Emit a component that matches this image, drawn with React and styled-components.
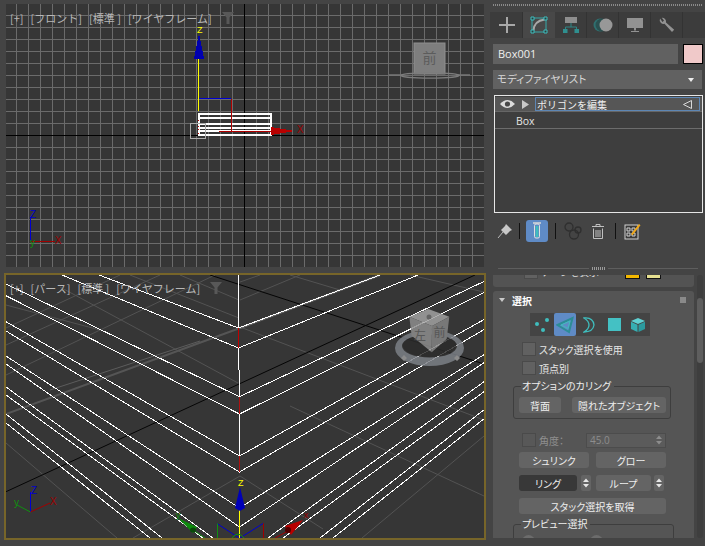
import React from "react";
import styled, { createGlobalStyle } from "styled-components";

const Global = createGlobalStyle`
  html, body { margin: 0; padding: 0; background: #444444; }
  * { box-sizing: border-box; }
  #root { width: 705px; height: 546px; overflow: hidden; }
`;

const jp = `"Noto Sans CJK JP", "Noto Sans", sans-serif`;

const Page = styled.div`
  width: 705px;
  height: 546px;
  display: flex;
  background: #444444;
  font-family: ${jp};
  font-feature-settings: "palt";
  color: #e4e4e4;
`;

const Views = styled.div`
  width: 490px;
  padding: 4px 4px 0;
  display: flex;
  flex-direction: column;
`;

const Viewport = styled.div`
  position: relative;
  background: #363636;
  height: ${(p) => (p.$active ? "267px" : "263px")};
  margin: ${(p) => (p.$active ? "0" : "0 2px 6px")};
  border: ${(p) => (p.$active ? "2px solid #776529" : "none")};
  overflow: hidden;
  svg { display: block; }
`;

const ViewLabel = styled.div`
  position: absolute;
  left: 4px;
  top: ${(p) => (p.$active ? "7px" : "8px")};
  display: flex;
  gap: 7px;
  font-size: 11px;
  line-height: 13px;
  color: #b8b8b8;
  white-space: nowrap;
  font-feature-settings: normal;
`;

const Side = styled.div`
  width: 215px;
  display: flex;
  flex-direction: column;
  padding: 4px 2px 0 3px;
`;

const Dots = styled.div`
  height: 2px;
  background: repeating-linear-gradient(90deg, #8a8a8a 0 1px, transparent 1px 2px);
`;

const TabBar = styled.div`
  display: flex;
  height: 26px;
  margin: 6px -2px 0 -3px;
  background: #3c3c3c;
  padding-left: 1px;
`;

const Tab = styled.div`
  width: 32px;
  height: 26px;
  display: flex;
  align-items: center;
  justify-content: center;
  background: ${(p) => (p.$active ? "#484848" : "transparent")};
  border-right: 1px solid ${(p) => (p.$active ? "#484848" : "#333333")};
`;

const NameRow = styled.div`
  display: flex;
  gap: 5px;
  margin-top: 6px;
`;

const NameField = styled.div`
  flex: 1;
  height: 20px;
  background: #616161;
  font-family: "Open Sans", sans-serif;
  font-size: 11px;
  line-height: 20px;
  padding-left: 5px;
  color: #eeeeee;
`;

const Swatch = styled.div`
  width: 20px;
  height: 20px;
  background: #f0c9c9;
  border: 1px solid #000000;
`;

const Dropdown = styled.div`
  margin-top: 6px;
  height: 19px;
  width: 209px;
  background: #616161;
  display: flex;
  align-items: center;
  justify-content: space-between;
  padding: 0 8px 2px 4px;
  font-size: 10.5px;
  color: #d8d8d8;
`;

const Arrow = styled.span`
  width: 0;
  height: 0;
  margin-top: 2px;
  border-left: 3px solid transparent;
  border-right: 3px solid transparent;
  border-top: 4px solid #eeeeee;
`;

const Stack = styled.div`
  margin: 6px 0 0 1px;
  width: 209px;
  height: 118px;
  border: 1.5px solid #e6e6e6;
  background: #3e3e3e;
  display: flex;
  flex-direction: column;
`;

const StackRow = styled.div`
  height: ${(p) => (p.$selected ? "15px" : "17px")};
  margin-top: ${(p) => (p.$selected ? "1px" : "0")};
  display: flex;
  align-items: center;
  background: ${(p) => (p.$selected ? "#565656" : "transparent")};
  border-bottom: 1px solid ${(p) => (p.$selected ? "#666666" : "#6c6c6c")};
  padding: ${(p) => (p.$selected ? "0 0 0 5px" : "2px 0 0 21px")};
  font-family: "Open Sans", sans-serif;
  font-size: 10.5px;
`;

const StackName = styled.div`
  width: 165px;
  height: 14px;
  margin-left: 6px;
  border: 1px solid #5d86b4;
  display: flex;
  align-items: center;
  justify-content: space-between;
  padding: 0 7px 0 1px;
  font-family: ${jp};
  font-size: 10px;
  font-feature-settings: normal;
  color: #f0f0f0;
`;

const Toolbar = styled.div`
  display: flex;
  align-items: center;
  height: 22px;
  margin-top: 7px;
`;

const ToolButton = styled.div`
  width: 22px;
  height: 22px;
  border-radius: 3px;
  display: flex;
  align-items: center;
  justify-content: center;
  background: ${(p) => (p.$active ? "#5f8bc6" : "transparent")};
  margin-left: ${(p) => p.$left || 0}px;
`;

const ToolSep = styled.div`
  width: 1px;
  height: 16px;
  background: #111111;
  margin-left: ${(p) => p.$left}px;
`;

const Divider = styled.div`
  display: flex;
  align-items: center;
  gap: 3px;
  margin: 25px 5px 0 5px;
  height: 3px;
`;

const DividerLine = styled.div`
  flex: 1;
  height: 1px;
  background: #5e5e5e;
`;

const DividerDots = styled.div`
  width: 13px;
  height: 3px;
  background: repeating-linear-gradient(90deg, #9a9a9a 0 1px, transparent 1px 2px);
`;

const Scroller = styled.div`
  display: flex;
  height: 263px;
  margin-top: 5px;
  overflow: hidden;
`;

const Rollouts = styled.div`
  width: 201px;
  overflow: hidden;
`;

const ScrollTrack = styled.div`
  width: 6px;
  margin-left: 3px;
  border-radius: 3px;
  background: #3e3e3e;
  padding-top: 23px;
`;

const ScrollThumb = styled.div`
  height: 65px;
  border-radius: 3px;
  background: #5e5e5e;
`;

const ClippedRollout = styled.div`
  height: 12px;
  background: #535353;
  border-radius: 0 0 3px 3px;
  overflow: hidden;
  padding-left: 31px;
`;

const ClippedInner = styled.div`
  display: flex;
  align-items: flex-end;
  height: 14px;
  margin-top: -10px;
  font-size: 10px;
  line-height: 14px;
  color: #dddddd;
  white-space: nowrap;
`;

const ClipLabel = styled.span`
  width: 84px;
`;

const ClipSwatch = styled.div`
  width: 15px;
  height: 14px;
  background: ${(p) => p.$color};
  border: 1px solid #111111;
  margin-right: 6px;
`;

const Rollout = styled.div`
  margin-top: 4px;
  height: 260px;
  background: #555555;
  border-radius: 3px 3px 0 0;
  padding-top: 2px;
`;

const RolloutHead = styled.div`
  display: flex;
  align-items: center;
  height: 14px;
  padding: 0 8px 0 6px;
  font-size: 10px;
  font-weight: 700;
  color: #ffffff;
`;

const HeadTriangle = styled.span`
  width: 0;
  height: 0;
  border-left: 3px solid transparent;
  border-right: 3px solid transparent;
  border-top: 4px solid #c9c9c9;
  margin-right: 7px;
`;

const Grip = styled.span`
  margin-left: auto;
  width: 6px;
  height: 6px;
  background-image: radial-gradient(#8e8e8e 0.7px, transparent 0.8px);
  background-size: 2px 2px;
`;

const SubStrip = styled.div`
  display: flex;
  width: 120px;
  height: 23px;
  margin: 6px 0 0 37px;
  background: #444444;
`;

const SubButton = styled.div`
  width: ${(p) => p.$w || 24}px;
  height: 23px;
  display: flex;
  align-items: center;
  justify-content: center;
  border-radius: 2px;
  background: ${(p) => (p.$active ? "#5f8bc6" : "transparent")};
`;

const CheckRow = styled.div`
  display: flex;
  align-items: center;
  height: 14px;
  margin: ${(p) => p.$top}px 0 0 29px;
  font-size: 10px;
  color: ${(p) => (p.$dim ? "#8f8f8f" : "#e6e6e6")};
  white-space: nowrap;
`;

const Check = styled.div`
  flex: none;
  width: 14px;
  height: 14px;
  background: ${(p) => (p.$dim ? "#585858" : "#616161")};
  border: 1px solid #4a4a4a;
  margin-right: 3px;
`;

const Group = styled.fieldset`
  margin: ${(p) => p.$top}px 0 0 20px;
  width: ${(p) => p.$w}px;
  height: ${(p) => p.$h}px;
  border: 1px solid #3e3e3e;
  border-radius: 3px;
  padding: 6px 0 0 5px;
  display: flex;
  gap: 11px;
`;

const Legend = styled.legend`
  font-size: 10px;
  line-height: 10px;
  padding: 0 3px 0 1px;
  margin-left: 2px;
  color: #eeeeee;
  white-space: nowrap;
`;

const Button = styled.div`
  width: ${(p) => p.$w}px;
  height: 16px;
  border-radius: 3px;
  background: ${(p) => (p.$dark ? "#383838" : "#646464")};
  display: flex;
  align-items: center;
  justify-content: center;
  font-size: 10px;
  color: #eeeeee;
  white-space: nowrap;
  margin-left: ${(p) => p.$left || 0}px;
`;

const ButtonRow = styled.div`
  display: flex;
  margin: ${(p) => p.$top}px 0 0 26px;
`;

const SpinField = styled.div`
  width: 80px;
  height: 15px;
  margin-left: 19px;
  background: #5b5b5b;
  border: 1px solid #4c4c4c;
  display: flex;
  align-items: center;
  justify-content: space-between;
  padding: 0 3px 0 3px;
  font-family: "Open Sans", sans-serif;
  font-size: 10px;
  color: #8d8d8d;
`;

const AngleLabel = styled.span`
  width: 28px;
`;

const Spin = styled.div`
  width: 10px;
  height: 16px;
  margin-left: ${(p) => p.$left}px;
  border-radius: 2px;
  background: #646464;
  display: flex;
  align-items: center;
  justify-content: center;
`;

const Radio = styled.div`
  width: 13px;
  height: 13px;
  border-radius: 50%;
  background: #6c6c6c;
  margin: 0 41px 0 3px;
`;

const SpinArrows = ({ color = "#e6e6e6" }) => (
  <svg width="6" height="10" viewBox="0 0 6 10">
    <path d="M3 0.5 6 4H0zM3 9.5 0 6h6z" fill={color} />
  </svg>
);

const range = (a, b) => Array.from({ length: b - a + 1 }, (_, i) => a + i);

const FrontView = () => (
  <svg width="478" height="263" viewBox="6 4 478 263" shapeRendering="crispEdges">
    {range(-20, 20).map((n) => (
      <line key={"v" + n} x1={244.5 + 12 * n} y1="4" x2={244.5 + 12 * n} y2="267" stroke="#6b6b6b" />
    ))}
    {range(-12, 12).map((n) => (
      <line key={"h" + n} x1="6" y1={135.5 + 12 * n} x2="484" y2={135.5 + 12 * n} stroke="#6b6b6b" />
    ))}
    <line x1="244.5" y1="4" x2="244.5" y2="267" stroke="#000" />
    <line x1="6" y1="135.5" x2="484" y2="135.5" stroke="#000" />

    {[114, 118, 124, 128, 131, 135].map((y) => (
      <line key={y} x1="198" y1={y} x2="272" y2={y} stroke="#fff" strokeWidth="2" />
    ))}
    <line x1="198.5" y1="113" x2="198.5" y2="136" stroke="#fff" strokeWidth="2" />
    <line x1="271" y1="113" x2="271" y2="136" stroke="#fff" strokeWidth="2" />
    {[120, 126, 129, 133].map((y) => (
      <rect key={y} x="198" y={y} width="1" height="1" fill="#c00000" />
    ))}
    <rect x="190.5" y="123.5" width="15" height="15" fill="none" stroke="#aaaaaa" />

    <line x1="198.5" y1="59" x2="198.5" y2="111" stroke="#ffff00" strokeWidth="1.5" />
    <line x1="199" y1="98.5" x2="231" y2="98.5" stroke="#0000d0" />
    <line x1="231.5" y1="98.5" x2="231.5" y2="131" stroke="#b00000" />
    <line x1="219" y1="131.5" x2="272" y2="131.5" stroke="#b00000" />
    <polygon points="199,33 204,59 194,59" fill="#0000b0" />
    <polygon points="271,127 295,131 271,135" fill="#b80000" />
    <text x="197" y="33" fontSize="9" fill="#ffff00" fontFamily="Liberation Sans">Z</text>
    <text x="297" y="133" fontSize="10" fill="#a00000" fontFamily="Liberation Sans">X</text>

    <line x1="30.5" y1="217" x2="30.5" y2="241" stroke="#0000d0" />
    <line x1="30.5" y1="241.5" x2="55" y2="241.5" stroke="#a00000" />
    <text x="30" y="218" fontSize="10" fill="#0000c8" fontFamily="Liberation Sans">Z</text>
    <text x="55" y="244" fontSize="10" fill="#a00000" fontFamily="Liberation Sans">X</text>
    <text x="30" y="246" fontSize="10" fill="#109010" fontFamily="Liberation Sans">y</text>

    <g shapeRendering="auto">
      <rect x="414" y="43" width="31" height="31" fill="#7e7e7e" stroke="#8e8e8e" />
      <text x="429.5" y="63" fontSize="14" fill="#5c5c5c" textAnchor="middle" fontFamily={jp}>前</text>
      <path d="M389 75h14M456 75h14" stroke="#777777" strokeWidth="1.5" />
      <ellipse cx="430" cy="75.5" rx="29" ry="2.6" fill="none" stroke="#7c7c7c" strokeWidth="1.4" />
    </g>
  </svg>
);

// white edges of the box in the perspective view: left end, corner, right end
const chevrons = [
  [99, 275, 238.5, 328, 380, 275],
  [62, 275, 238.5, 348, 418, 275],
  [6, 284, 239.5, 396.7, 485, 281],
  [6, 295.7, 239.5, 414, 485, 292],
  [6, 321.7, 239.5, 456, 485, 319],
  [6, 331, 239.5, 472, 485, 329],
  [6, 356, 239.5, 508, 485, 354],
  [6, 364, 239.5, 527, 485, 362],
];

const loose = [
  [6, 387, 213, 538],
  [6, 395, 203, 538],
  [6, 414, 162, 538],
  [6, 423, 150, 538],
  [268, 538, 485, 381],
  [283, 538, 485, 391],
  [320, 538, 485, 409],
  [333, 538, 485, 418],
];

const faint = [
  [6, 443, 117, 538],
  [290, 406, 484, 496],
  [362, 538, 484, 436],
  [240, 476, 323, 529],
  [133, 538, 240, 476],
  [240, 327, 484, 420],
  [6, 328, 120, 275],
  [6, 345, 160, 275],
  [6, 375, 215, 275],
  [6, 305, 100, 330],
  [60, 287, 238, 383],
  [130, 275, 239, 318],
  [180, 275, 239, 300],
  [240, 300, 300, 275],
  [240, 282, 260, 275],
  [290, 275, 340, 290],
  [410, 275, 484, 292],
];

const PerspectiveView = () => (
  <svg width="478" height="263" viewBox="6 275 478 263">
    {faint.map(([a, b, c, d], i) => (
      <line key={i} x1={a} y1={b} x2={c} y2={d} stroke="#535353" />
    ))}
    <line x1="6" y1="414" x2="240" y2="328" stroke="#555555" strokeWidth="2" />
    <line x1="50" y1="390" x2="200" y2="341" stroke="#5c5c5c" />
    <line x1="240" y1="328" x2="380" y2="275" stroke="#6e6e6e" strokeWidth="2" />
    <line x1="6" y1="491.7" x2="475" y2="275" stroke="#050505" />
    <line x1="210" y1="275" x2="484" y2="364" stroke="#050505" />

    <g shapeRendering="crispEdges">
      {chevrons.map(([a, b, c, d, e, f], i) => (
        <polyline key={i} points={`${a},${b} ${c},${d} ${e},${f}`} fill="none" stroke="#ffffff" />
      ))}
      {loose.map(([a, b, c, d], i) => (
        <line key={i} x1={a} y1={b} x2={c} y2={d} stroke="#ffffff" />
      ))}
      <line x1="238.5" y1="275" x2="238.5" y2="328" stroke="#fff" />
      <line x1="238.5" y1="328" x2="238.5" y2="348" stroke="#c00000" strokeWidth="1.5" />
      <line x1="238.5" y1="348" x2="238.5" y2="370" stroke="#fff" />
      <line x1="239.5" y1="370" x2="239.5" y2="397" stroke="#fff" />
      <line x1="239.5" y1="397" x2="239.5" y2="414" stroke="#b01010" />
      <line x1="239.5" y1="414" x2="239.5" y2="456" stroke="#fff" />
      <line x1="239.5" y1="456" x2="239.5" y2="472" stroke="#b01010" />
      <line x1="239.5" y1="510" x2="239.5" y2="538" stroke="#ffff00" strokeWidth="1.5" />
    </g>

    <polygon points="240,487 245,508 240,511 235,508" fill="#0000b8" />
    <text x="238" y="486" fontSize="9" fill="#ffff00" fontFamily="Liberation Sans">Z</text>

    <path d="M217 523.5 239 538M263 523.5 240 538" fill="none" stroke="#0000d0" />
    <line x1="217.5" y1="523.5" x2="217.5" y2="538" stroke="#109010" />
    <line x1="263.5" y1="523.5" x2="263.5" y2="538" stroke="#a00000" />
    <path d="M232 538Q238 530 244 538" fill="none" stroke="#109010" />

    <line x1="190" y1="528" x2="205" y2="538" stroke="#109010" />
    <polygon points="178,518 197,527 193,533" fill="#0d8a0d" />
    <ellipse cx="193" cy="530" rx="3" ry="2.5" fill="#0a4a0a" />
    <text x="176" y="518" fontSize="9" fill="#109010" fontFamily="Liberation Sans">y</text>

    <line x1="275" y1="538" x2="290" y2="530" stroke="#a00000" />
    <polygon points="303,520 291,535 285,526" fill="#b80000" />
    <ellipse cx="288" cy="530" rx="3" ry="3" fill="#500000" />
    <text x="304" y="518" fontSize="9" fill="#a00000" fontFamily="Liberation Sans">x</text>

    <line x1="30.5" y1="492" x2="30.5" y2="512" stroke="#0000d0" />
    <line x1="30.5" y1="512" x2="50" y2="503" stroke="#a00000" />
    <line x1="30.5" y1="512" x2="17" y2="505" stroke="#109010" />
    <text x="31" y="494" fontSize="10" fill="#0000c8" fontFamily="Liberation Sans">Z</text>
    <text x="50" y="505" fontSize="10" fill="#a00000" fontFamily="Liberation Sans">X</text>
    <text x="14" y="506" fontSize="10" fill="#109010" fontFamily="Liberation Sans">y</text>

    <g opacity="0.85">
      <ellipse cx="429.5" cy="345" rx="27" ry="12" fill="#2c2c2c" />
      <path
        d="M395 348a34.5 18 0 1 0 69 0a34.5 18 0 1 0-69 0zM402 346a27.5 11.5 0 1 1 55 0a27.5 11.5 0 1 1-55 0z"
        fill="#7c8087"
        fillRule="evenodd"
      />
      <polygon points="409.3,316.7 428.3,309 449.3,316.7 432,326" fill="#a2a2a2" />
      <polygon points="409.3,316.7 432,326 431.7,352.3 411.7,335.7" fill="#8e8e8e" />
      <polygon points="432,326 449.3,316.7 446.7,339 431.7,352.3" fill="#848484" />
      <text x="420" y="340" fontSize="12" fill="#5d5d5d" textAnchor="middle" fontFamily={jp}>左</text>
      <text x="439.5" y="337" fontSize="12" fill="#5d5d5d" textAnchor="middle" fontFamily={jp}>前</text>
      <circle cx="429" cy="317" r="2.5" fill="#6e6e6e" />
      <path d="M401 358l3-3 3 3-3 3zM454 358l3-3 3 3-3 3z" fill="#9a9a9a" />
    </g>
  </svg>
);

const Funnel = () => (
  <svg width="12" height="12" viewBox="0 0 12 12" style={{ marginLeft: 3 }}>
    <path d="M0 0h12L7.5 5.5V12h-3V5.5z" fill="#585858" />
  </svg>
);

const teal = "#3fbdbd";

export default function App() {
  return (
    <Page>
      <Global />
      <Views>
        <Viewport>
          <FrontView />
          <ViewLabel>
            <span>[+]</span>
            <span>[フロント]</span>
            <span>[標準 ]</span>
            <span>[ワイヤフレーム]</span>
            <Funnel />
          </ViewLabel>
        </Viewport>
        <Viewport $active>
          <PerspectiveView />
          <ViewLabel $active>
            <span>[+]</span>
            <span>[パース]</span>
            <span>[標準 ]</span>
            <span>[ワイヤフレーム]</span>
            <Funnel />
          </ViewLabel>
        </Viewport>
      </Views>

      <Side>
        <Dots />
        <TabBar>
          <Tab>
            <svg width="18" height="18" viewBox="0 0 18 18">
              <path d="M9 1v16M1 9h16" stroke="#a8a8a8" strokeWidth="2" />
            </svg>
          </Tab>
          <Tab $active>
            <svg width="18" height="18" viewBox="0 0 18 18" fill="none">
              <rect x="2" y="2" width="14" height="14" stroke="#37a8a8" />
              <path d="M3.5 14.5Q4 5 14.5 3.5" stroke="#a8a8a8" strokeWidth="2" />
              <path d="M1 1h3v3H1zM14 1h3v3h-3zM1 14h3v3H1zM14 14h3v3h-3z" fill="#2b3b3b" stroke={teal} />
            </svg>
          </Tab>
          <Tab>
            <svg width="18" height="18" viewBox="0 0 18 18" fill="none">
              <rect x="3" y="1" width="12" height="6" fill="#8e8e8e" />
              <path d="M9 7v4M3.5 13v-2h11v2" stroke="#2f8585" />
              <rect x="1" y="13" width="4.5" height="4" fill="#2f8f8f" />
              <rect x="12.5" y="13" width="4.5" height="4" fill="#2f8f8f" />
            </svg>
          </Tab>
          <Tab>
            <svg width="20" height="16" viewBox="0 0 20 16">
              <circle cx="7" cy="8" r="6.5" fill="#2f7070" />
              <circle cx="9" cy="8" r="6.5" fill="#2a5050" />
              <circle cx="13" cy="8" r="6.5" fill="#989898" />
            </svg>
          </Tab>
          <Tab>
            <svg width="18" height="18" viewBox="0 0 18 18">
              <rect x="1" y="2" width="16" height="10" fill="#929292" />
              <path d="M8 12h2v2.5H8zM5 15h8v1H5z" fill="#929292" />
            </svg>
          </Tab>
          <Tab>
            <svg width="18" height="18" viewBox="0 0 18 18" fill="none">
              <path d="M2 2.5a4 4 0 0 0 1 4.5 4 4 0 0 0 3.5 .8L14 16l2.2-2.2L8 6.5A4 4 0 0 0 7 3 4 4 0 0 0 3.8 1.8L6 4.5 4.5 6z" fill="#929292" />
            </svg>
          </Tab>
        </TabBar>

        <NameRow>
          <NameField>Box001</NameField>
          <Swatch />
        </NameRow>
        <Dropdown>
          モディファイヤリスト
          <Arrow />
        </Dropdown>
        <Stack>
          <StackRow $selected>
            <svg width="15" height="10" viewBox="0 0 15 10">
              <path d="M0 5Q7.5-3 15 5 7.5 13 0 5z" fill="#dcdcdc" />
              <circle cx="7.5" cy="5" r="2.6" fill="#484848" />
            </svg>
            <svg width="7" height="9" viewBox="0 0 7 9" style={{ marginLeft: 7 }}>
              <path d="M0 0l7 4.5L0 9z" fill="#c8c8c8" />
            </svg>
            <StackName>
              ポリゴンを編集
              <svg width="9" height="9" viewBox="0 0 9 9">
                <path d="M8.5 .5v8L.5 4.5z" fill="none" stroke="#d8d8d8" />
              </svg>
            </StackName>
          </StackRow>
          <StackRow>Box</StackRow>
        </Stack>

        <Toolbar>
          <ToolButton $left={1}>
            <svg width="16" height="16" viewBox="0 0 16 16">
              <path d="M1 15l5-6" stroke="#bbbbbb" />
              <path d="M9 1l6 6-2 1-3 3-1 1-5-5 1-1 3-3z" fill="#c8c8c8" />
            </svg>
          </ToolButton>
          <ToolSep $left={3} />
          <ToolButton $active $left={6}>
            <svg width="10" height="18" viewBox="0 0 10 18" fill="none">
              <path d="M1 1h8" stroke="#d8d8d8" strokeWidth="1.5" />
              <rect x="2.5" y="2" width="5" height="14" rx="1.5" stroke="#e0e0e0" />
              <rect x="3.7" y="4" width="2.6" height="11" fill={teal} />
            </svg>
          </ToolButton>
          <ToolSep $left={7} />
          <ToolButton $left={6}>
            <svg width="18" height="18" viewBox="0 0 18 18" fill="none" stroke="#2f2f2f" strokeWidth="1.3">
              <circle cx="5" cy="5" r="4" />
              <circle cx="10" cy="12.5" r="4.5" />
              <circle cx="14" cy="8" r="3" />
            </svg>
          </ToolButton>
          <ToolButton $left={3}>
            <svg width="12" height="15" viewBox="0 0 12 15" fill="none" stroke="#c0c0c0">
              <path d="M0 2.5h12M4 2.5V.5h4v2M1.5 4.5V14.5h9V4.5M4 6v7M6 6v7M8 6v7" />
            </svg>
          </ToolButton>
          <ToolSep $left={6} />
          <ToolButton $left={5}>
            <svg width="17" height="17" viewBox="0 0 17 17">
              <rect x="1" y="2" width="13" height="14" fill="#3a3a3a" stroke="#d0d0d0" />
              <path d="M3 5h3v3H3zM8 5h3v3H8zM3 10h3v3H3zM8 10h3v3H8z" fill="none" stroke="#d0d0d0" />
              <path d="M7 11l8-10 1.5 1.2-8 10z" fill="#f0a818" />
            </svg>
          </ToolButton>
        </Toolbar>

        <Divider>
          <DividerLine />
          <DividerDots />
          <DividerLine />
        </Divider>

        <Scroller>
          <Rollouts>
            <ClippedRollout>
              <ClippedInner>
                <Check />
                <ClipLabel>ケージを表示</ClipLabel>
                <ClipSwatch $color="#f4b800" />
                <ClipSwatch $color="#e6e090" />
              </ClippedInner>
            </ClippedRollout>
            <Rollout>
              <RolloutHead>
                <HeadTriangle />
                選択
                <Grip />
              </RolloutHead>
              <SubStrip>
                <SubButton>
                  <svg width="16" height="16" viewBox="0 0 16 16" fill={teal}>
                    <circle cx="3" cy="7" r="2" />
                    <circle cx="13" cy="3" r="2" />
                    <circle cx="9" cy="13" r="2" />
                  </svg>
                </SubButton>
                <SubButton $active $w={22}>
                  <svg width="18" height="18" viewBox="0 0 18 18" fill="none">
                    <path d="M1.5 9 16.5 2 13 16z" stroke="#2c8d96" strokeWidth="2" />
                    <path d="M5 9 14 5 12 12.5z" stroke={teal} />
                  </svg>
                </SubButton>
                <SubButton $w={26}>
                  <svg width="12" height="16" viewBox="0 0 12 16" fill="none">
                    <path d="M1 1Q10 0 11 8 10 15 1 15 6 12 6 8 6 4 1 1z" stroke={teal} strokeWidth="1.3" />
                  </svg>
                </SubButton>
                <SubButton>
                  <svg width="13" height="13" viewBox="0 0 13 13">
                    <rect width="13" height="13" fill="#44c1c4" />
                  </svg>
                </SubButton>
                <SubButton>
                  <svg width="16" height="16" viewBox="0 0 16 16">
                    <path d="M8 1 15 4 8 7 1 4z" fill="#5fd0d2" />
                    <path d="M1 4.8 7.5 7.8V15L1 12z" fill="#36aeb2" />
                    <path d="M15 4.8 8.5 7.8V15L15 12z" fill="#2b9a9e" />
                  </svg>
                </SubButton>
              </SubStrip>

              <CheckRow $top={6}><Check />スタック選択を使用</CheckRow>
              <CheckRow $top={5}><Check />頂点別</CheckRow>

              <Group $top={6} $w={158} $h={38}>
                <Legend>オプションのカリング</Legend>
                <Button $w={42}>背面</Button>
                <Button $w={94}>隠れたオブジェクト</Button>
              </Group>

              <CheckRow $top={14} $dim>
                <Check $dim />
                <AngleLabel>角度：</AngleLabel>
                <SpinField>45.0<SpinArrows color="#8d8d8d" /></SpinField>
              </CheckRow>

              <ButtonRow $top={5}>
                <Button $w={70}>シュリンク</Button>
                <Button $w={70} $left={7}>グロー</Button>
              </ButtonRow>
              <ButtonRow $top={7}>
                <Button $w={58} $dark>リング</Button>
                <Spin $left={4}><SpinArrows /></Spin>
                <Button $w={55} $left={5}>ループ</Button>
                <Spin $left={3}><SpinArrows /></Spin>
              </ButtonRow>
              <ButtonRow $top={7}>
                <Button $w={147}>スタック選択を取得</Button>
              </ButtonRow>

              <Group $top={5} $w={161} $h={40}>
                <Legend>プレビュー選択</Legend>
                <Radio />
                <Radio />
              </Group>
            </Rollout>
          </Rollouts>
          <ScrollTrack>
            <ScrollThumb />
          </ScrollTrack>
        </Scroller>
      </Side>
    </Page>
  );
}
